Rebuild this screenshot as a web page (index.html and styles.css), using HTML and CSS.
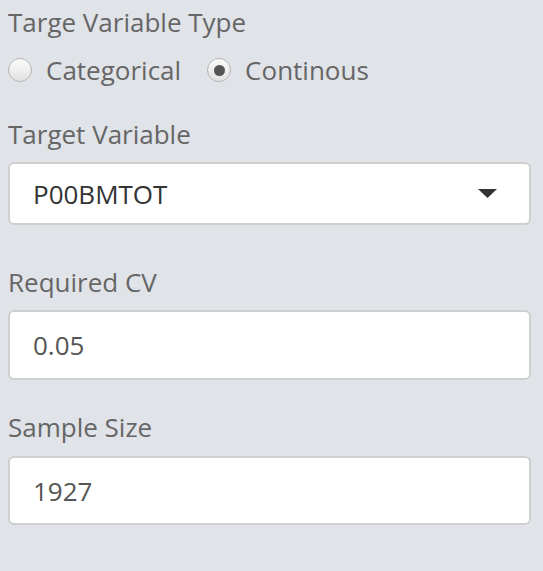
FILE: index.html
```html
<!DOCTYPE html>
<html>
<head>
<meta charset="utf-8">
<link rel="stylesheet" href="styles.css">
</head>
<body>
<div class="panel">
  <div class="group">
    <div class="label">Targe Variable Type</div>
    <div class="radios">
      <label class="radio"><span class="circle"></span><span>Categorical</span></label>
      <label class="radio"><span class="circle checked"></span><span>Continous</span></label>
    </div>
  </div>
  <div class="group g-select">
    <div class="label">Target Variable</div>
    <div class="select">
      <span class="select-text">P00BMTOT</span>
      <svg class="caret" width="19" height="9" viewBox="0 0 19 9"><path d="M0 0H19L9.5 9Z" fill="#333"/></svg>
    </div>
  </div>
  <div class="group g-cv">
    <div class="label">Required CV</div>
    <div class="input">0.05</div>
  </div>
  <div class="group g-size">
    <div class="label">Sample Size</div>
    <div class="input input-size">1927</div>
  </div>
</div>
</body>
</html>
```

FILE: styles.css
```css
html, body {
  margin: 0;
  padding: 0;
  background: #e0e3e8;
}
body {
  font-family: "Open Sans", "DejaVu Sans", sans-serif;
  font-size: 26px;
  color: #666;
}
.panel {
  padding: 4px 12px 0 8px;
}
.label {
  line-height: 36px;
  color: #666;
}
.radios {
  display: flex;
  gap: 26px;
  margin-top: 10px;
  height: 40px;
  align-items: center;
}
.radio {
  display: flex;
  align-items: center;
  gap: 14px;
}
.circle {
  width: 22px;
  height: 22px;
  border-radius: 50%;
  border: 1px solid #b5b5b5;
  background: linear-gradient(#fbfbfb, #e2e2e2);
  display: flex;
  align-items: center;
  justify-content: center;
}
.circle.checked::after {
  content: "";
  width: 11px;
  height: 11px;
  border-radius: 50%;
  background: #555;
}
.g-select {
  margin-top: 26px;
}
.g-cv {
  margin-top: 39px;
}
.g-size {
  margin-top: 29px;
}
.select, .input {
  box-sizing: border-box;
  margin-top: 10px;
  background: #fff;
  border: 2px solid #cfcfcf;
  border-radius: 6px;
  display: flex;
  align-items: center;
  padding: 0 32px 0 23px;
  font-size: 26px;
}
.select {
  height: 63px;
  justify-content: space-between;
  color: #333;
}
.input {
  height: 70px;
  color: #555;
}
.input-size {
  margin-top: 11px;
  height: 69px;
}
```
